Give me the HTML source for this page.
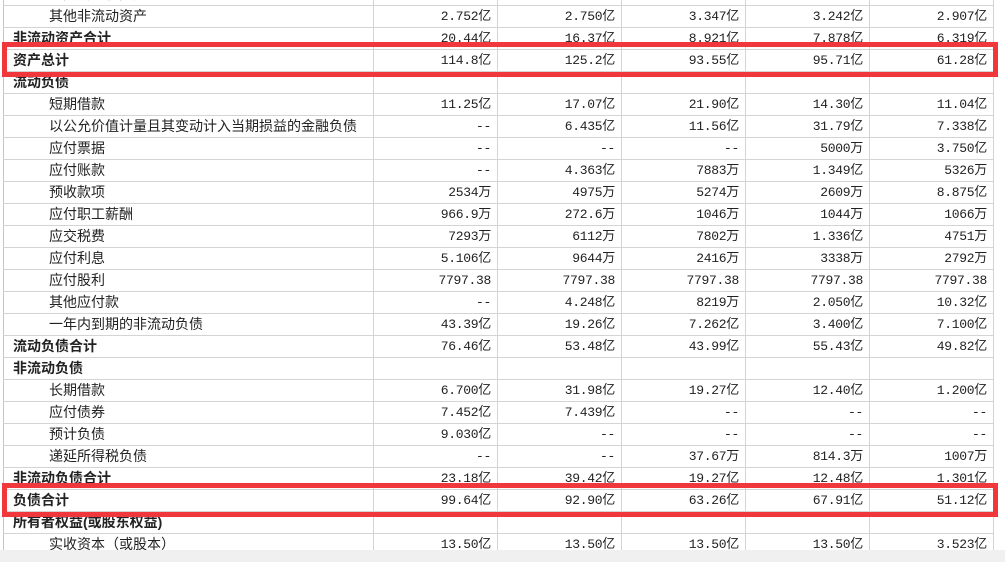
<!DOCTYPE html>
<html><head><meta charset="utf-8"><style>
html,body{margin:0;padding:0;background:#f0f0f0;width:1005px;height:562px;overflow:hidden}
.wrap{position:absolute;left:0;top:0;width:1005px;height:550px;overflow:hidden;background:#fff}
.vl{position:absolute;top:0;height:550px;width:1px;background:#d4d4d4}
.row{position:absolute;left:3px;width:990px;height:22px;border-bottom:1px solid #d4d4d4;box-sizing:border-box;font:14px "Liberation Mono","Noto Sans CJK SC",monospace;color:#222;line-height:21px}
.row .l{position:absolute;left:46px;white-space:nowrap;font-family:"Liberation Sans","Noto Sans CJK SC",sans-serif}
.row.b .l{left:10px;font-weight:bold}
.row .v{position:absolute;width:118px;text-align:right;white-space:nowrap;font-family:"Liberation Mono","Noto Sans CJK SC",monospace;font-size:13px;letter-spacing:-0.3px}
.red{position:absolute;border:5px solid #f0383c;box-sizing:border-box}
</style></head><body>
<div class="wrap" id="w">
<div class="vl" style="left:3px;background:#b8c8d8"></div>
<div class="vl" style="left:373px"></div>
<div class="vl" style="left:497px"></div>
<div class="vl" style="left:621px"></div>
<div class="vl" style="left:745px"></div>
<div class="vl" style="left:869px"></div>
<div class="vl" style="left:993px"></div>
</div>
<script>
var rows=[
[0,"递延所得税资产","亿","亿","亿","亿","亿"],
[0,"其他非流动资产","2.752亿","2.750亿","3.347亿","3.242亿","2.907亿"],
[1,"非流动资产合计","20.44亿","16.37亿","8.921亿","7.878亿","6.319亿"],
[1,"资产总计","114.8亿","125.2亿","93.55亿","95.71亿","61.28亿"],
[1,"流动负债","","","","",""],
[0,"短期借款","11.25亿","17.07亿","21.90亿","14.30亿","11.04亿"],
[0,"以公允价值计量且其变动计入当期损益的金融负债","--","6.435亿","11.56亿","31.79亿","7.338亿"],
[0,"应付票据","--","--","--","5000万","3.750亿"],
[0,"应付账款","--","4.363亿","7883万","1.349亿","5326万"],
[0,"预收款项","2534万","4975万","5274万","2609万","8.875亿"],
[0,"应付职工薪酬","966.9万","272.6万","1046万","1044万","1066万"],
[0,"应交税费","7293万","6112万","7802万","1.336亿","4751万"],
[0,"应付利息","5.106亿","9644万","2416万","3338万","2792万"],
[0,"应付股利","7797.38","7797.38","7797.38","7797.38","7797.38"],
[0,"其他应付款","--","4.248亿","8219万","2.050亿","10.32亿"],
[0,"一年内到期的非流动负债","43.39亿","19.26亿","7.262亿","3.400亿","7.100亿"],
[1,"流动负债合计","76.46亿","53.48亿","43.99亿","55.43亿","49.82亿"],
[1,"非流动负债","","","","",""],
[0,"长期借款","6.700亿","31.98亿","19.27亿","12.40亿","1.200亿"],
[0,"应付债券","7.452亿","7.439亿","--","--","--"],
[0,"预计负债","9.030亿","--","--","--","--"],
[0,"递延所得税负债","--","--","37.67万","814.3万","1007万"],
[1,"非流动负债合计","23.18亿","39.42亿","19.27亿","12.48亿","1.301亿"],
[1,"负债合计","99.64亿","92.90亿","63.26亿","67.91亿","51.12亿"],
[1,"所有者权益(或股东权益)","","","","",""],
[0,"实收资本（或股本）","13.50亿","13.50亿","13.50亿","13.50亿","3.523亿"]];
var w=document.getElementById('w'),h='';
var xs=[373,497,621,745,869];
rows.forEach(function(r,i){
 var top=4+22*(i-1)+2;
 h+='<div class="row'+(r[0]?' b':'')+'" style="top:'+top+'px"><span class="l">'+r[1]+'</span>';
 for(var k=0;k<5;k++) h+='<span class="v" style="left:'+(xs[k]-3)+'px">'+r[k+2]+'</span>';
 h+='</div>';
});
h+='<div class="red" style="left:2px;top:42px;width:996px;height:35px"></div>';
h+='<div class="red" style="left:2px;top:483px;width:996px;height:34px"></div>';
w.insertAdjacentHTML('beforeend',h);
</script>
</body></html>
